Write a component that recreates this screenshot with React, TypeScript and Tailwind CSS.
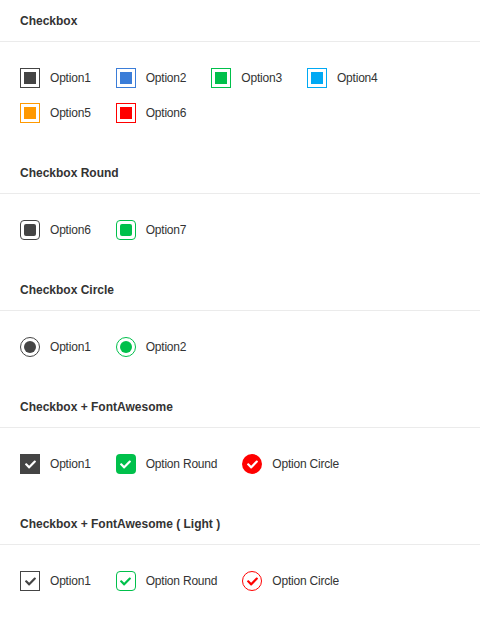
import React from "react";
import { FaCheck } from "react-icons/fa";

type Shape = "square" | "round" | "circle";

const outerShape: Record<Shape, string> = {
  square: "rounded-none",
  round: "rounded-[4px]",
  circle: "rounded-full",
};
const innerShape: Record<Shape, string> = {
  square: "rounded-none",
  round: "rounded-[2px]",
  circle: "rounded-full",
};

function Label({ children }: { children: React.ReactNode }) {
  return (
    <span className="text-[12px] leading-[14px] tracking-[-0.2px] text-[#333]">{children}</span>
  );
}

function Fill({ color, shape, label }: { color: string; shape: Shape; label: string }) {
  return (
    <div className="flex items-center gap-[10px]">
      <div
        className={`w-5 h-5 border flex items-center justify-center ${outerShape[shape]}`}
        style={{ borderColor: color }}
      >
        <div className={`w-3 h-3 ${innerShape[shape]}`} style={{ backgroundColor: color }} />
      </div>
      <Label>{label}</Label>
    </div>
  );
}

function Icon({ color, shape, label, light }: { color: string; shape: Shape; label: string; light?: boolean }) {
  return (
    <div className="flex items-center gap-[10px]">
      <div
        className={`w-5 h-5 flex items-center justify-center ${outerShape[shape]} ${light ? "border bg-white" : ""}`}
        style={light ? { borderColor: color } : { backgroundColor: color }}
      >
        <FaCheck className="w-[11px] h-[11px]" style={{ color: light ? color : "#fff" }} />
      </div>
      <Label>{label}</Label>
    </div>
  );
}

function Section({ title, children }: { title: string; children: React.ReactNode }) {
  return (
    <div className="pb-[29px]">
      <div className="h-[42px] flex items-center px-5 border-b border-[#ebebeb]">
        <h2 className="text-[12px] leading-[14px] font-bold text-[#333]">{title}</h2>
      </div>
      <div className="px-5 pt-[26px] flex flex-col gap-[15px]">{children}</div>
    </div>
  );
}

function Row({ children }: { children: React.ReactNode }) {
  return <div className="flex items-center gap-x-[25px]">{children}</div>;
}

export default function App() {
  return (
    <div
      className="w-[480px] h-[620px] bg-white overflow-hidden"
      style={{ fontFamily: '"Liberation Sans", Arial, sans-serif' }}
    >
      <Section title="Checkbox">
        <Row>
          <Fill color="#444444" shape="square" label="Option1" />
          <Fill color="#3b7dd8" shape="square" label="Option2" />
          <Fill color="#00c04b" shape="square" label="Option3" />
          <Fill color="#00a9f4" shape="square" label="Option4" />
        </Row>
        <Row>
          <Fill color="#ff9900" shape="square" label="Option5" />
          <Fill color="#ff0000" shape="square" label="Option6" />
        </Row>
      </Section>
      <Section title="Checkbox Round">
        <Row>
          <Fill color="#444444" shape="round" label="Option6" />
          <Fill color="#00c04b" shape="round" label="Option7" />
        </Row>
      </Section>
      <Section title="Checkbox Circle">
        <Row>
          <Fill color="#444444" shape="circle" label="Option1" />
          <Fill color="#00c04b" shape="circle" label="Option2" />
        </Row>
      </Section>
      <Section title="Checkbox + FontAwesome">
        <Row>
          <Icon color="#444444" shape="square" label="Option1" />
          <Icon color="#00c04b" shape="round" label="Option Round" />
          <Icon color="#ff0000" shape="circle" label="Option Circle" />
        </Row>
      </Section>
      <Section title="Checkbox + FontAwesome ( Light )">
        <Row>
          <Icon color="#444444" shape="square" label="Option1" light />
          <Icon color="#00c04b" shape="round" label="Option Round" light />
          <Icon color="#ff0000" shape="circle" label="Option Circle" light />
        </Row>
      </Section>
    </div>
  );
}
